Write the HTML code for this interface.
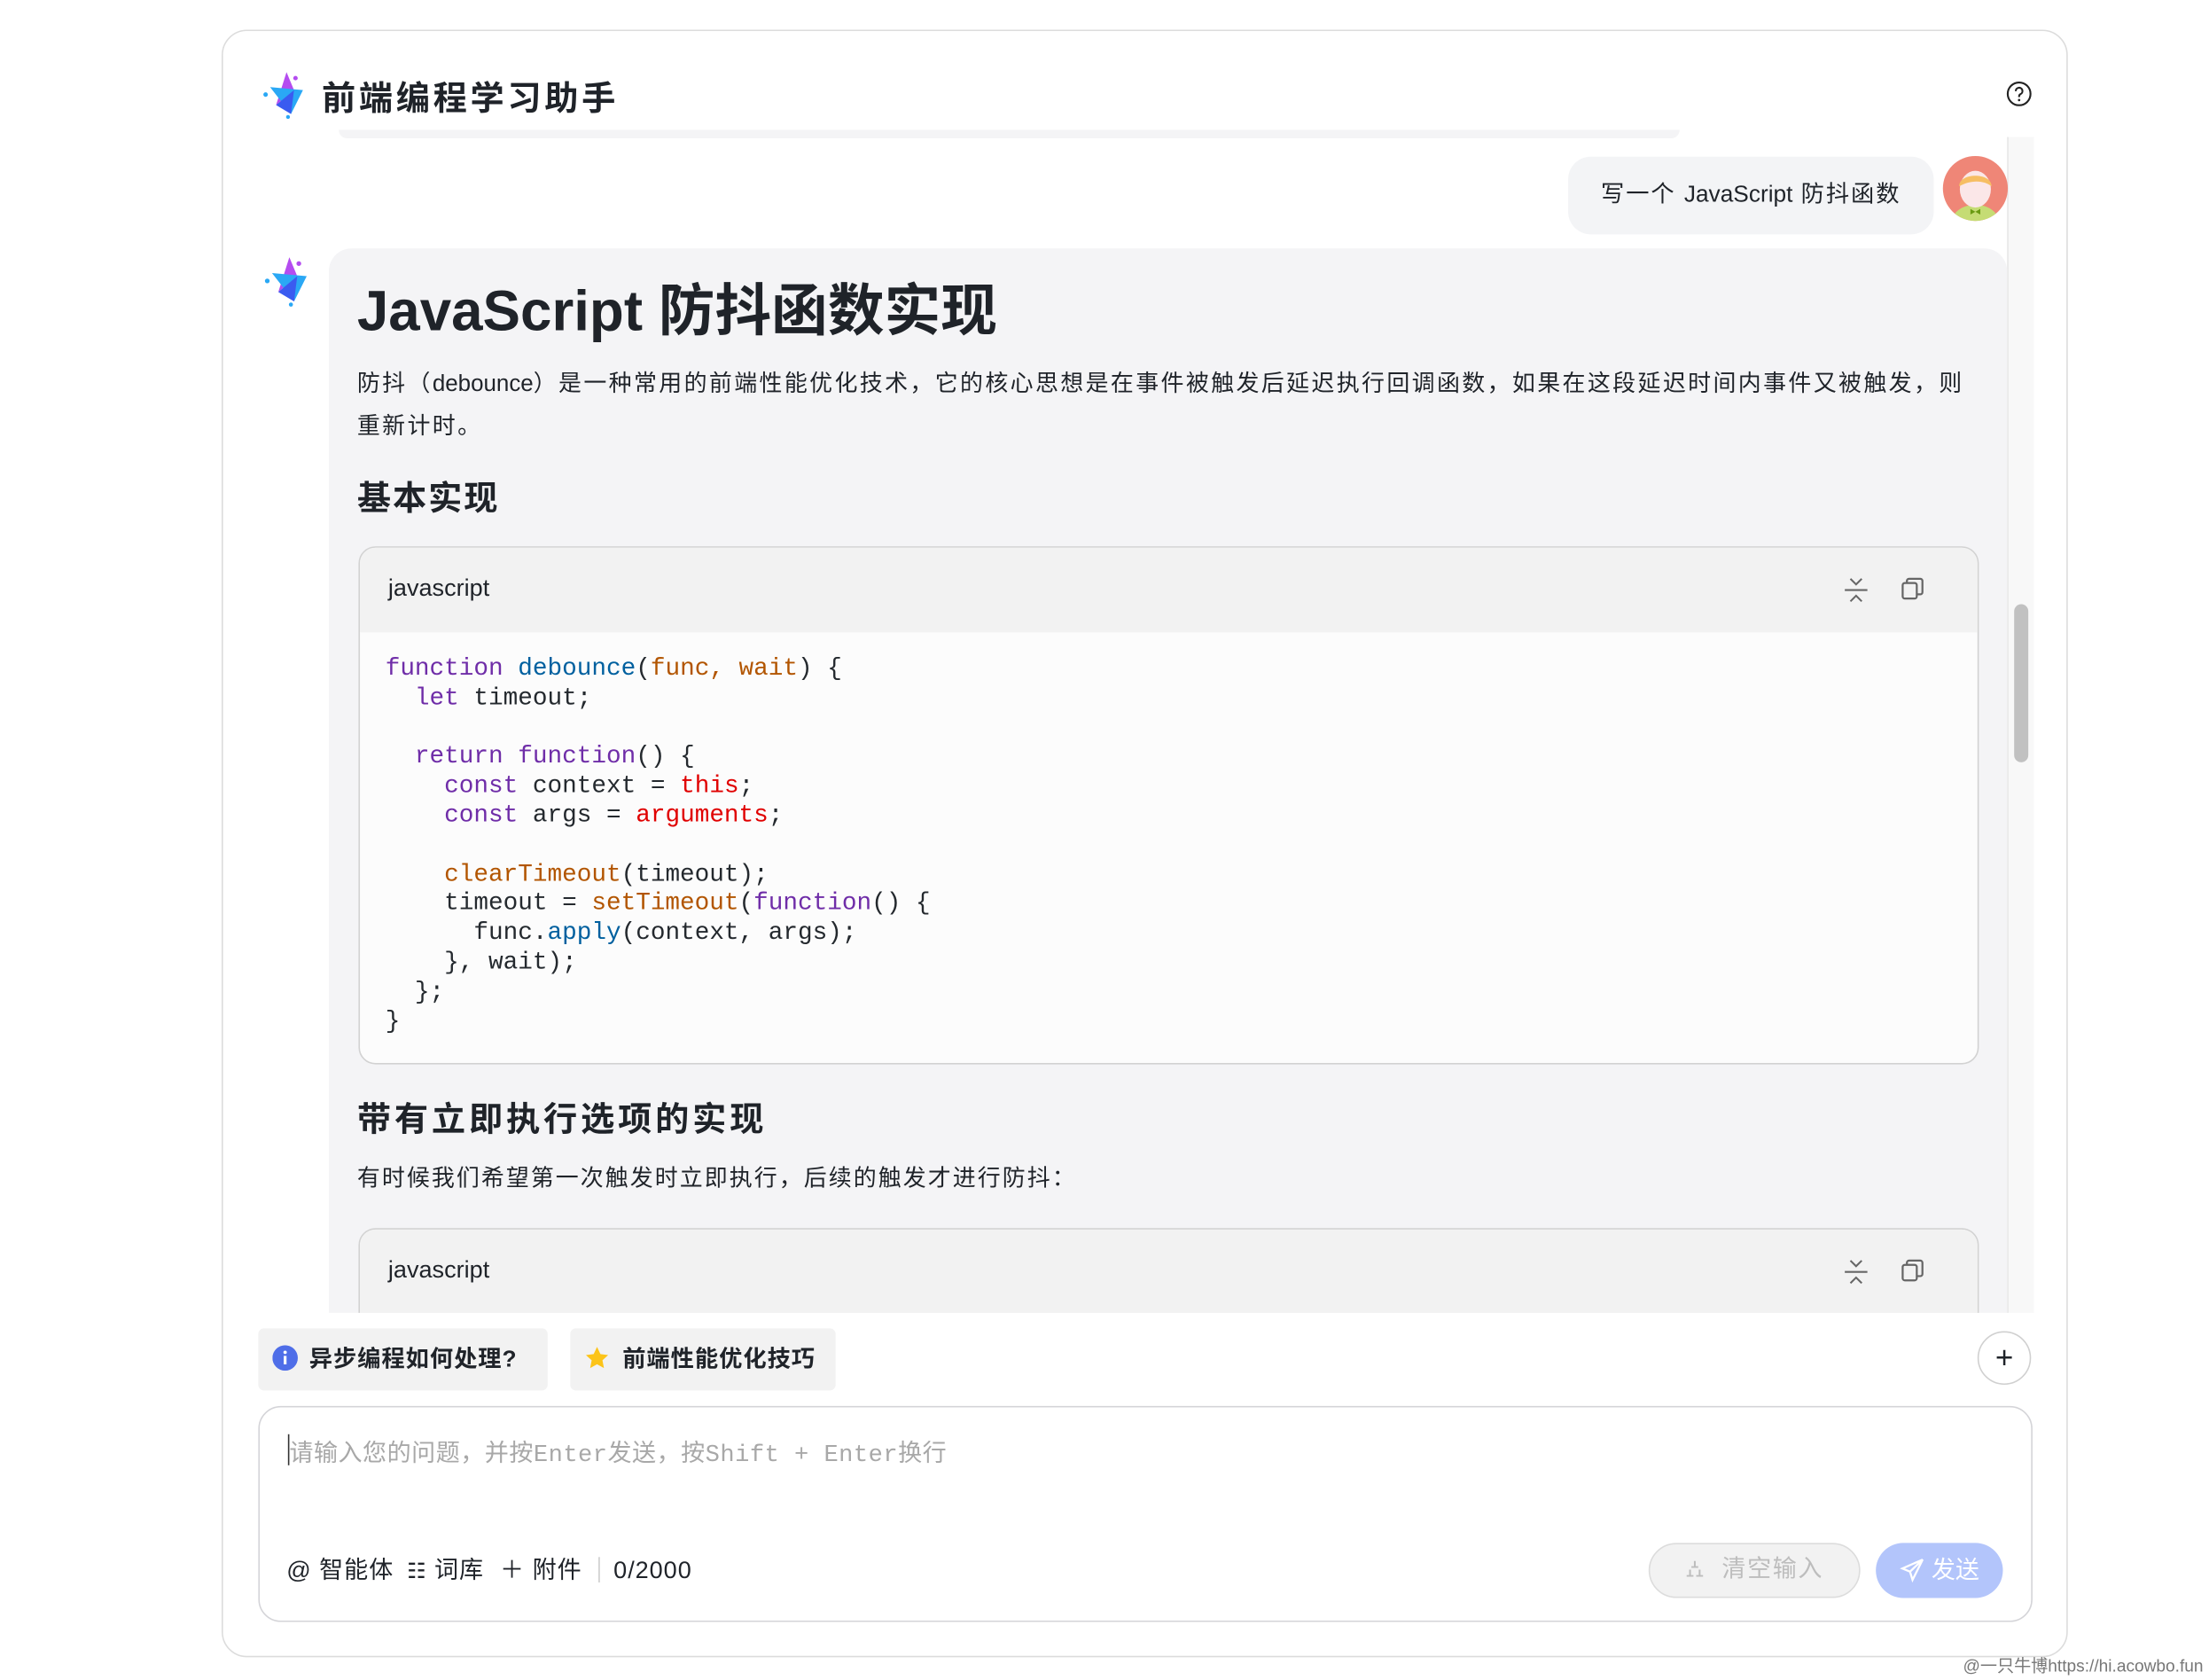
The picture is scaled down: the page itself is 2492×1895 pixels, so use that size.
<!DOCTYPE html>
<html><head><meta charset="utf-8"><style>
html,body{margin:0;padding:0;background:#fff;width:2492px;height:1894px;overflow:hidden}
#s{position:absolute;left:0;top:0;width:1565px;height:1190px;transform:scale(1.5923);transform-origin:0 0;font-family:"Liberation Sans","Noto Sans CJK SC",sans-serif;color:#1f2329}
.a{position:absolute}
.card{left:157px;top:21px;width:1308px;height:1153px;border:1px solid #dcdcdc;border-radius:18px;box-sizing:border-box}
.code{font-family:"Liberation Mono","Noto Sans CJK SC",monospace;font-size:17.4px;line-height:20.8px;white-space:pre;color:#24292e}
.k{color:#6f2da8}.f{color:#00609f}.p{color:#b25500}.r{color:#e00000}
.cb{border:1px solid #d2d2d2;border-radius:12px;background:#fcfcfc;overflow:hidden;box-sizing:border-box}
.ch{height:60px;background:#f2f2f2;position:relative}
.ch span{position:absolute;left:20px;top:19px;font-size:17px}
.chip{background:#f2f2f2;border-radius:4px;height:44px;font-size:16.5px;font-weight:bold;line-height:44px;box-sizing:border-box;letter-spacing:0.6px}
.ls{letter-spacing:0}
</style></head><body><div id="s">
<div class="a card"></div>
<svg class="a" style="left:185px;top:49px" width="36" height="36" viewBox="0 0 34 34">
<polygon points="17,2 22,14 10,24" fill="#b44cf0"/><polygon points="6,12 28,14 20,30" fill="#2aa8f5"/><polygon points="10,24 22,14 20,30" fill="#3a5bf0"/><circle cx="3" cy="17" r="1.5" fill="#2aa8f5"/><circle cx="23" cy="6" r="1.5" fill="#b44cf0"/><circle cx="18" cy="32" r="1.3" fill="#2aa8f5"/></svg>
<div class="a" style="left:228px;top:50px;font-size:24px;font-weight:bold;letter-spacing:2.3px">前端编程学习助手</div>
<svg class="a" style="left:1421px;top:57px" width="19" height="19" viewBox="0 0 20 20"><circle cx="10" cy="10" r="8.5" fill="none" stroke="#222" stroke-width="1.4"/><path d="M7.5 8a2.5 2.5 0 1 1 3.5 2.2c-.7.4-1 .8-1 1.6v.6" fill="none" stroke="#222" stroke-width="1.4"/><circle cx="10" cy="14.6" r=".9" fill="#222"/></svg>
<div class="a" style="left:240px;top:92px;width:950px;height:6px;border-radius:0 0 12px 12px;background:#f4f4f6"></div>
<div class="a" style="left:1422px;top:97px;width:18px;height:833px;background:#f8f8f8;border-left:1px solid #e8e8e8"></div>
<div class="a" style="left:1427px;top:428px;width:10px;height:112px;border-radius:5px;background:#c1c1c1"></div>
<div class="a" style="left:1111px;top:111px;width:259px;height:55px;background:#f3f4f6;border-radius:16px;font-size:16.5px;line-height:55px;text-align:center;letter-spacing:1.2px;white-space:nowrap">写一个 <span class="ls">JavaScript</span> 防抖函数</div>
<svg class="a" style="left:1376px;top:110px" width="47" height="47" viewBox="0 0 47 47"><defs><clipPath id="c"><circle cx="23.5" cy="23.5" r="23"/></clipPath></defs><circle cx="23.5" cy="23.5" r="23" fill="#ef8677"/><g clip-path="url(#c)"><ellipse cx="23.5" cy="48" rx="17" ry="13" fill="#c5dc74"/><ellipse cx="23.5" cy="24" rx="11" ry="13" fill="#fbe7e8"/><path d="M12 22c0-10 23-10 23 0c-5-4-14-5-23 0z" fill="#f6be63"/><path d="M20 38l3.5 2l3.5-2v4l-3.5-2l-3.5 2z" fill="#6a9a12"/></g></svg>
<svg class="a" style="left:186px;top:180px" width="38" height="38" viewBox="0 0 34 34">
<polygon points="17,2 22,14 10,24" fill="#b44cf0"/><polygon points="6,12 28,14 20,30" fill="#2aa8f5"/><polygon points="10,24 22,14 20,30" fill="#3a5bf0"/><circle cx="3" cy="17" r="1.5" fill="#2aa8f5"/><circle cx="23" cy="6" r="1.5" fill="#b44cf0"/><circle cx="18" cy="32" r="1.3" fill="#2aa8f5"/></svg>
<div class="a" style="left:233px;top:176px;width:1189px;height:754px;background:#f4f4f6;border-radius:16px 16px 0 0;overflow:hidden">
<div class="a" style="left:20px;top:12px;font-size:40px;font-weight:bold;white-space:nowrap">JavaScript 防抖函数实现</div>
<div class="a" style="left:20px;top:81px;width:1146px;font-size:16.3px;line-height:30px;letter-spacing:1.5px">防抖（<span class="ls">debounce</span>）是一种常用的前端性能优化技术，它的核心思想是在事件被触发后延迟执行回调函数，如果在这段延迟时间内事件又被触发，则重新计时。</div>
<div class="a" style="left:20px;top:157px;font-size:24px;font-weight:bold;letter-spacing:1.2px">基本实现</div>
<div class="a cb" style="left:21px;top:211px;width:1148px;height:367px">
<div class="ch"><span>javascript</span>
<svg class="a" style="left:1050px;top:20px" width="20" height="20" viewBox="0 0 20 20" fill="none" stroke="#666" stroke-width="1.3"><path d="M6 2l4 4l4-4M2 10h16M6 18l4-4l4 4"/></svg>
<svg class="a" style="left:1091px;top:20px" width="18" height="18" viewBox="0 0 18 18" fill="none" stroke="#666" stroke-width="1.4"><rect x="2" y="5" width="10" height="11" rx="1.5"/><path d="M5 5V3.5A1.5 1.5 0 0 1 6.5 2h8A1.5 1.5 0 0 1 16 3.5v8a1.5 1.5 0 0 1-1.5 1.5H12"/></svg></div>
<div class="a code" style="left:18px;top:77px"><span class="k">function</span> <span class="f">debounce</span>(<span class="p">func, wait</span>) {
  <span class="k">let</span> timeout;

  <span class="k">return</span> <span class="k">function</span>() {
    <span class="k">const</span> context = <span class="r">this</span>;
    <span class="k">const</span> args = <span class="r">arguments</span>;

    <span class="p">clearTimeout</span>(timeout);
    timeout = <span class="p">setTimeout</span>(<span class="k">function</span>() {
      func.<span class="f">apply</span>(context, args);
    }, wait);
  };
}</div>
</div>
<div class="a" style="left:20px;top:597px;font-size:24px;font-weight:bold;letter-spacing:2.4px">带有立即执行选项的实现</div>
<div class="a" style="left:20px;top:645px;font-size:16.3px;letter-spacing:1.3px">有时候我们希望第一次触发时立即执行，后续的触发才进行防抖：</div>
<div class="a cb" style="left:21px;top:694px;width:1148px;height:120px">
<div class="ch"><span>javascript</span>
<svg class="a" style="left:1050px;top:20px" width="20" height="20" viewBox="0 0 20 20" fill="none" stroke="#666" stroke-width="1.3"><path d="M6 2l4 4l4-4M2 10h16M6 18l4-4l4 4"/></svg>
<svg class="a" style="left:1091px;top:20px" width="18" height="18" viewBox="0 0 18 18" fill="none" stroke="#666" stroke-width="1.4"><rect x="2" y="5" width="10" height="11" rx="1.5"/><path d="M5 5V3.5A1.5 1.5 0 0 1 6.5 2h8A1.5 1.5 0 0 1 16 3.5v8a1.5 1.5 0 0 1-1.5 1.5H12"/></svg></div>
</div>
</div>
<div class="a chip" style="left:183px;top:941px;width:205px;padding-left:10px"><svg style="vertical-align:-3px;margin-right:8px" width="18" height="18" viewBox="0 0 18 18"><circle cx="9" cy="9" r="9" fill="#4f6ee8"/><rect x="8" y="7.5" width="2" height="6" fill="#fff"/><circle cx="9" cy="5" r="1.2" fill="#fff"/></svg>异步编程如何处理?</div>
<div class="a chip" style="left:404px;top:941px;width:188px;padding-left:10px"><svg style="vertical-align:-3px;margin-right:9px" width="18" height="18" viewBox="0 0 24 24"><path d="M12 1.5l3.2 6.8l7.3.9l-5.4 5l1.4 7.3L12 17.9l-6.5 3.6l1.4-7.3l-5.4-5l7.3-.9z" fill="#fcc419"/></svg>前端性能优化技巧</div>
<div class="a" style="left:1401px;top:943px;width:38px;height:38px;border:1px solid #d0d0d0;border-radius:50%;box-sizing:border-box;text-align:center;line-height:35px;font-size:22px">+</div>
<div class="a" style="left:183px;top:996px;width:1257px;height:153px;border:1.5px solid #d4d4d8;border-radius:16px;box-sizing:border-box"></div>
<div class="a" style="left:204px;top:1016px;width:1px;height:22px;background:#333"></div>
<div class="a" style="left:205px;top:1015px;font-size:17px;color:#a8a8a8;font-family:'Liberation Mono','Noto Sans CJK SC',monospace;letter-spacing:0.3px;white-space:nowrap">请输入您的问题，并按Enter发送，按Shift + Enter换行</div>
<div class="a" style="left:203px;top:1098px;font-size:17px;white-space:nowrap;letter-spacing:0.6px">@ 智能体 <span style="font-size:15px;margin-left:4px">☷</span> 词库 <span style="margin-left:6px">＋</span> 附件 <span style="display:inline-block;width:1px;height:18px;background:#ccc;vertical-align:-3px;margin:0 10px 0 6px"></span>0/2000</div>
<div class="a" style="left:1168px;top:1093px;width:150px;height:39px;border:1.5px solid #dcdcdc;border-radius:20px;background:#f2f2f2;box-sizing:border-box;color:#bdbdbd;font-size:17px;line-height:36px;text-align:center;letter-spacing:1px">⛼&nbsp; 清空输入</div>
<div class="a" style="left:1329px;top:1093px;width:90px;height:39px;border-radius:20px;background:#b3c5fb;color:#fff;font-size:17px;line-height:39px;text-align:center"><svg style="vertical-align:-3px" width="18" height="18" viewBox="0 0 20 20" fill="none" stroke="#fff" stroke-width="1.6"><path d="M18 2L2 9l6 2.5L18 2L10 18l-2-6.5"/></svg> 发送</div>
<div class="a" style="right:4px;top:1171px;font-size:12px;color:#777;white-space:nowrap">@一只牛博https://hi.acowbo.fun</div>
</div></body></html>
